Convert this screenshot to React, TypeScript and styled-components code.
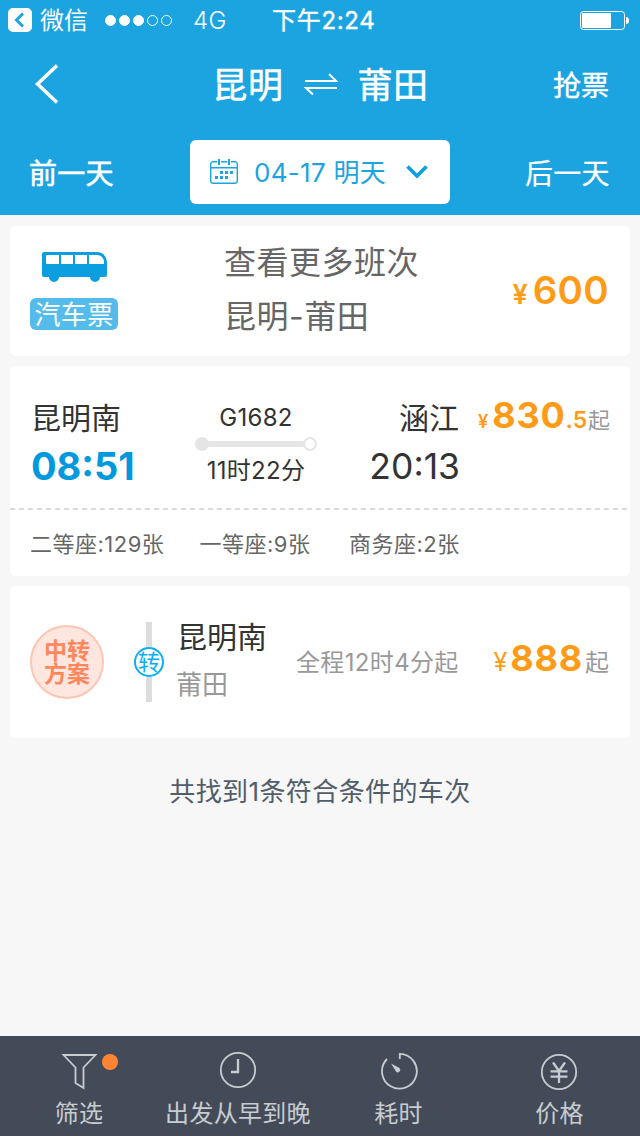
import React from "react";
import styled, { createGlobalStyle } from "styled-components";

const GlobalStyle = createGlobalStyle`
  * { box-sizing: border-box; }
  body {
    margin: 0;
    background: #f7f7f7;
    font-family: Inter, "Noto Sans CJK SC", sans-serif;
    font-weight: 375;
    color: #333;
    white-space: nowrap;
  }
`;

const Page = styled.div`
  width: 640px;
  height: 1136px;
  display: flex;
  flex-direction: column;
  overflow: hidden;
`;

const Header = styled.header`
  height: 215px;
  background: #1ba4e0;
  color: #fff;
`;

const StatusBar = styled.div`
  height: 40px;
  display: flex;
  align-items: center;
  padding: 0 11px 0 8px;
  font-size: 24px;
  line-height: 40px;
`;

const Dots = styled.div`
  display: flex;
  gap: 3px;
  margin-left: 17px;
`;

const Dot = styled.i<{ $on: boolean }>`
  width: 11px;
  height: 11px;
  border-radius: 50%;
  border: 1px solid #fff;
  background: ${(p) => (p.$on ? "#fff" : "transparent")};
`;

const BackApp = styled.span`
  margin-left: 8px;
  padding-top: 2px;
`;
const Network = styled.span`
  margin-left: 21px;
  width: 79px;
  padding-top: 1px;
  font-weight: 350;
  letter-spacing: 0.4px;
`;
const Clock = styled.span`
  font-size: 24px;
  font-weight: 400;
  -webkit-text-stroke: 0.4px currentColor;
  letter-spacing: 0.7px;
  padding-top: 1px;
  flex: 1;
`;

const NavBar = styled.div`
  height: 87px;
  display: grid;
  grid-template-columns: 140px 1fr 140px;
  align-items: center;
  padding: 0 31px 0 34px;
`;

const Title = styled.h1`
  margin: 0 2px 0 0;
  padding-top: 3px;
  display: flex;
  align-items: center;
  justify-content: center;
  gap: 20px;
  font-size: 35px;
  line-height: 50px;
  letter-spacing: 0.6px;
  font-weight: 400;
  -webkit-text-stroke: 0.5px currentColor;
  > svg { margin-top: -2px; }
`;

const NavAction = styled.span`
  text-align: right;
  font-size: 28px;
  font-weight: 400;
  -webkit-text-stroke: 0.4px currentColor;
`;

const DateRow = styled.div`
  margin-top: 13px;
  height: 64px;
  display: flex;
  align-items: center;
  justify-content: space-between;
  padding: 0 30px 0 29px;
`;

const DayLink = styled.span<{ $stroke: number }>`
  width: 85px;
  font-size: 28px;
  letter-spacing: 0.2px;
  font-weight: 400;
  padding-bottom: 1px;
  -webkit-text-stroke: ${(p) => p.$stroke}px currentColor;
`;

const DatePicker = styled.div`
  width: 260px;
  height: 64px;
  margin-left: 1px;
  border-radius: 6px;
  background: #fff;
  color: #1ba4e0;
  display: flex;
  align-items: center;
  padding: 0 22px 0 20px;
  font-size: 26px;
`;
const DateLabel = styled.span`
  margin-left: 16px;
  flex: 1;
  letter-spacing: 0.3px;
  padding-bottom: 3px;
`;

const List = styled.main`
  flex: 1;
  padding: 11px 10px 0;
  display: flex;
  flex-direction: column;
  gap: 10px;
`;

const Card = styled.section<{ $h: number }>`
  height: ${(p) => p.$h}px;
  background: #fff;
  border-radius: 6px;
  display: flex;
  flex-direction: column;
`;

const BusRow = styled.div`
  display: flex;
  align-items: center;
  height: 130px;
  padding: 0 21px 0 20px;
`;

const BusTicket = styled.div`
  width: 88px;
  display: flex;
  flex-direction: column;
  gap: 16px;
  align-items: center;
  > svg { margin-left: 2px; }
`;

const BusBadge = styled.span`
  width: 88px;
  height: 32px;
  border-radius: 6px;
  background: #55bbea;
  color: #fff;
  font-size: 26px;
  line-height: 33px;
  letter-spacing: 0.3px;
  text-align: center;
`;

const BusInfo = styled.div`
  margin-left: 106px;
  flex: 1;
  font-size: 32px;
  line-height: 54px;
  letter-spacing: 0.5px;
  color: #666;
  padding-bottom: 3px;
`;

const Price = styled.div<{ $top?: number }>`
  display: flex;
  align-items: baseline;
  color: #ff9b16;
  margin-top: ${(p) => p.$top ?? 0}px;
`;
const Amount = styled.span<{ $size: number; $spacing?: number; $weight?: number; $gap?: number }>`
  font-size: ${(p) => p.$size}px;
  line-height: 44px;
  font-weight: ${(p) => p.$weight ?? 600};
  letter-spacing: ${(p) => p.$spacing ?? 0}px;
  margin-left: ${(p) => p.$gap ?? 0}px;
`;
const From = styled.span<{ $size: number; $gap: number }>`
  font-size: ${(p) => p.$size}px;
  line-height: 30px;
  margin-left: ${(p) => p.$gap}px;
  color: #999;
`;

const TrainRow = styled.div`
  height: 142px;
  display: flex;
  padding: 28px 21px 0;
`;

const Stop = styled.div<{ $w: number; $right?: boolean }>`
  width: ${(p) => p.$w}px;
  text-align: ${(p) => (p.$right ? "right" : "left")};
`;
const Station = styled.div`
  font-size: 30px;
  line-height: 49px;
`;
const Depart = styled.div`
  font-size: 38px;
  line-height: 46px;
  font-weight: 700;
  color: #0099de;
`;
const Arrive = styled.div`
  font-size: 35.5px;
  line-height: 47px;
  font-weight: 380;
  margin-right: -1px;
`;

const Trip = styled.div`
  width: 122px;
  margin-left: 34px;
  display: flex;
  flex-direction: column;
  align-items: center;
  line-height: 40px;
  padding-top: 4px;
  font-size: 24px;
  letter-spacing: 0.3px;
`;
const TripTime = styled.div`
  padding-top: 1px;
`;
const Track = styled.div`
  width: 122px;
  height: 14px;
  display: flex;
  align-items: center;
  margin: -1px 0 -1px;
`;
const Rail = styled.i`
  flex: 1;
  height: 6px;
  margin: 0 -1px;
  background: #e5e5e5;
`;
const TrackEnd = styled.i<{ $open?: boolean }>`
  width: 14px;
  height: 14px;
  border-radius: 50%;
  border: 2px solid #e5e5e5;
  background: ${(p) => (p.$open ? "#fff" : "#e5e5e5")};
`;

const Dash = styled.div`
  height: 2px;
  background: repeating-linear-gradient(to right, #d9d9d9 0 5px, transparent 5px 9px);
`;

const Seats = styled.div`
  flex: 1;
  display: grid;
  grid-template-columns: 169.5px 149.5px 1fr;
  align-items: center;
  padding: 0 0 3px 20px;
  font-size: 22px;
  letter-spacing: 0.5px;
  color: #666;
`;

const TransferRow = styled.div`
  display: flex;
  height: 152px;
  padding: 0 21px 0 20px;
`;

const PlanBadge = styled.div`
  width: 74px;
  height: 74px;
  margin-top: 39px;
  border-radius: 50%;
  border: 2px solid #ffc5b3;
  background: #ffe7e0;
  color: #ff875e;
  font-size: 23px;
  font-weight: 700;
  line-height: 23px;
  text-align: center;
  padding-top: 13px;
`;

const Timeline = styled.div`
  width: 30px;
  height: 80px;
  margin: 36px 0 0 30px;
  display: flex;
  flex-direction: column;
  align-items: center;
`;
const Stem = styled.i`
  width: 6px;
  flex: 1;
  background: #ddd;
`;
const TransferMark = styled.span`
  width: 30px;
  height: 30px;
  border-radius: 50%;
  border: 2px solid #0aadf8;
  color: #0aadf8;
  font-size: 22px;
  line-height: 26px;
  display: flex;
  justify-content: center;
`;

const TransferStops = styled.div`
  margin: 27px 0 0 13px;
  width: 119px;
`;
const Destination = styled.div`
  font-size: 26px;
  line-height: 46px;
  margin-left: -1px;
  color: #999;
`;
const Duration = styled.div`
  flex: 1;
  margin-top: 62px;
  font-size: 24px;
  line-height: 30px;
  letter-spacing: 0.35px;
  color: #999;
`;

const Summary = styled.p`
  margin: 24px 0 0;
  text-align: center;
  font-size: 26px;
  line-height: 40px;
  letter-spacing: 0.4px;
  color: #515d6b;
`;

const TabBar = styled.nav`
  height: 100px;
  background: #434b59;
  color: #c8ccd0;
  display: grid;
  grid-template-columns: 157px 161px 160px 162px;
`;
const Tab = styled.div`
  display: flex;
  flex-direction: column;
  align-items: center;
  padding-top: 15px;
  font-size: 24px;
  line-height: 36px;
  letter-spacing: 0.3px;
`;
const TabIcon = styled.div`
  position: relative;
  width: 40px;
  height: 40px;
  margin-bottom: 5px;
`;
const TabLabel = styled.span`
  padding-left: 1px;
`;
const Notice = styled.i`
  position: absolute;
  left: 43px;
  top: 3px;
  width: 16px;
  height: 16px;
  border-radius: 50%;
  background: #ff8534;
`;

const BackBox = () => (
  <svg width="24" height="24" viewBox="0 0 24 24" fill="none">
    <rect width="24" height="24" rx="5" fill="#fff" />
    <path d="M15 5.500 8.500 12l6.500 6.500" stroke="#1ba4e0" strokeWidth="3" />
  </svg>
);

const Battery = () => (
  <svg width="49" height="19" viewBox="0 0 49 19" fill="none">
    <rect x="0.500" y="0.500" width="44" height="18" rx="3" stroke="#fff" />
    <rect x="2" y="2" width="29" height="15" rx="1" fill="#fff" />
    <path d="M46 6c2 0 3 1.500 3 3.500S48 13 46 13z" fill="#fff" />
  </svg>
);

const BackChevron = () => (
  <svg width="26" height="42" viewBox="0 0 26 42" fill="none" stroke="#fff" strokeWidth="3.500">
    <path d="M23 2.500 3.500 21 23 39.500" />
  </svg>
);

const SwapArrows = () => (
  <svg width="34" height="24" viewBox="0 0 34 24" fill="none" stroke="#fff" strokeWidth="2">
    <path d="M1 9h31l-7-7M33 16H2l7 6.500" />
  </svg>
);

const Calendar = () => (
  <svg width="28" height="26" viewBox="0 0 28 26" fill="none" stroke="#1ba4e0" strokeWidth="1.400">
    <path d="M7 2.700H3A2.300 2.300 0 0 0 .7 5v17A2.300 2.300 0 0 0 3 24.300h22a2.300 2.300 0 0 0 2.300-2.300V5A2.300 2.300 0 0 0 25 2.700h-4M11 2.700h6M.7 8.700h26.600" />
    <path d="M9 0v6M19 0v6" strokeWidth="2" />
    <path d="M10 13.500h14M5 18.500h14" strokeWidth="3" strokeDasharray="3 2" />
  </svg>
);

const DownChevron = () => (
  <svg width="22" height="16" viewBox="0 0 22 16" fill="none" stroke="#0c9fe0" strokeWidth="3.700">
    <path d="m1.500 2.500 9.500 9.500 9.500-9.500" />
  </svg>
);

const Bus = () => (
  <svg width="66" height="30" viewBox="0 0 66 30">
    <path d="M2 0h53c6 0 10 5 10 11v12a2 2 0 0 1-2 2h-5a5 5 0 0 1-10 0H17a5 5 0 0 1-10 0H2a2 2 0 0 1-2-2V2a2 2 0 0 1 2-2z" fill="#0c9fe0" />
    <path d="M5 3h12v9H5a1 1 0 0 1-1-1V4a1 1 0 0 1 1-1zM19 3h12v9H19zM33 3h12v9H33zM47 3h8c4 0 7 3 7 7v2H47z" fill="#fff" />
  </svg>
);

const iconProps = {
  width: 40,
  height: 40,
  viewBox: "0 0 40 40",
  fill: "none",
  stroke: "#c8ccd0",
  strokeWidth: 1.8,
};

const Filter = () => (
  <svg {...iconProps}>
    <path d="M4.500 4h32L24.500 16.500V37l-8-5V16.500z" />
  </svg>
);
const ClockIcon = () => (
  <svg {...iconProps}>
    <circle cx="20" cy="19" r="17.200" />
    <path d="M20 8v13h-7" strokeWidth="2.300" />
  </svg>
);
const Timer = () => (
  <svg {...iconProps}>
    <path d="M21.800 8V2.800A17.400 17.400 0 1 1 9 8" />
    <path d="m13 12.500 8.500 4.500a2 2 0 1 1-3.500 3.500z" fill="#c8ccd0" stroke="none" />
  </svg>
);
const Yuan = () => (
  <svg {...iconProps}>
    <circle cx="20" cy="21" r="17.200" />
    <path d="m14 11.500 6 8.500 6-8.500M20 20v12M11.500 20.300h17M11.500 25.700h17" strokeWidth="2.300" />
  </svg>
);

const tabs = [
  { label: "筛选", icon: <Filter />, notice: true },
  { label: "出发从早到晚", icon: <ClockIcon /> },
  { label: "耗时", icon: <Timer /> },
  { label: "价格", icon: <Yuan /> },
];

export default function App() {
  return (
    <Page>
      <GlobalStyle />
      <Header>
        <StatusBar>
          <BackBox />
          <BackApp>微信</BackApp>
          <Dots>
            {[true, true, true, false, false].map((on, i) => (
              <Dot key={i} $on={on} />
            ))}
          </Dots>
          <Network>4G</Network>
          <Clock>下午2:24</Clock>
          <Battery />
        </StatusBar>
        <NavBar>
          <BackChevron />
          <Title>
            <span>昆明</span>
            <SwapArrows />
            <span>莆田</span>
          </Title>
          <NavAction>抢票</NavAction>
        </NavBar>
        <DateRow>
          <DayLink $stroke={0.6}>前一天</DayLink>
          <DatePicker>
            <Calendar />
            <DateLabel>04-17 明天</DateLabel>
            <DownChevron />
          </DatePicker>
          <DayLink $stroke={0.2}>后一天</DayLink>
        </DateRow>
      </Header>

      <List>
        <Card $h={130}>
          <BusRow>
            <BusTicket>
              <Bus />
              <BusBadge>汽车票</BusBadge>
            </BusTicket>
            <BusInfo>
              <div>查看更多班次</div>
              <div>昆明-莆田</div>
            </BusInfo>
            <Price $top={2}>
              <Amount $size={27}>¥</Amount>
              <Amount $size={38.5} $gap={5} $spacing={0.3}>600</Amount>
            </Price>
          </BusRow>
        </Card>

        <Card $h={210}>
          <TrainRow>
            <Stop $w={130}>
              <Station>昆明南</Station>
              <Depart>08:51</Depart>
            </Stop>
            <Trip>
              <div>G1682</div>
              <Track>
                <TrackEnd />
                <Rail />
                <TrackEnd $open />
              </Track>
              <TripTime>11时22分</TripTime>
            </Trip>
            <Stop $w={142} $right>
              <Station>涵江</Station>
              <Arrive>20:13</Arrive>
            </Stop>
            <Stop $w={150}>
              <Price $top={-1}>
                <Amount $size={18} $gap={19}>¥</Amount>
                <Amount $size={36} $gap={4} $weight={650} $spacing={0.8}>830</Amount>
                <Amount $size={23}>.5</Amount>
                <From $size={22} $gap={1}>起</From>
              </Price>
            </Stop>
          </TrainRow>
          <Dash />
          <Seats>
            <span>二等座:129张</span>
            <span>一等座:9张</span>
            <span>商务座:2张</span>
          </Seats>
        </Card>

        <Card $h={152}>
          <TransferRow>
            <PlanBadge>
              中转
              <br />
              方案
            </PlanBadge>
            <Timeline>
              <Stem />
              <TransferMark>转</TransferMark>
              <Stem />
            </Timeline>
            <TransferStops>
              <Station>昆明南</Station>
              <Destination>莆田</Destination>
            </TransferStops>
            <Duration>全程12时4分起</Duration>
            <Price $top={50}>
              <Amount $size={25}>
                <Light>¥</Light>
              </Amount>
              <Amount $size={36} $weight={700} $gap={3} $spacing={0.8}>888</Amount>
              <From $size={24} $gap={2}>起</From>
            </Price>
          </TransferRow>
        </Card>

        <Summary>共找到1条符合条件的车次</Summary>
      </List>

      <TabBar>
        {tabs.map((t) => (
          <Tab key={t.label}>
            <TabIcon>
              {t.icon}
              {t.notice && <Notice />}
            </TabIcon>
            <TabLabel>{t.label}</TabLabel>
          </Tab>
        ))}
      </TabBar>
    </Page>
  );
}

const Light = styled.span`
  font-weight: 380;
`;
